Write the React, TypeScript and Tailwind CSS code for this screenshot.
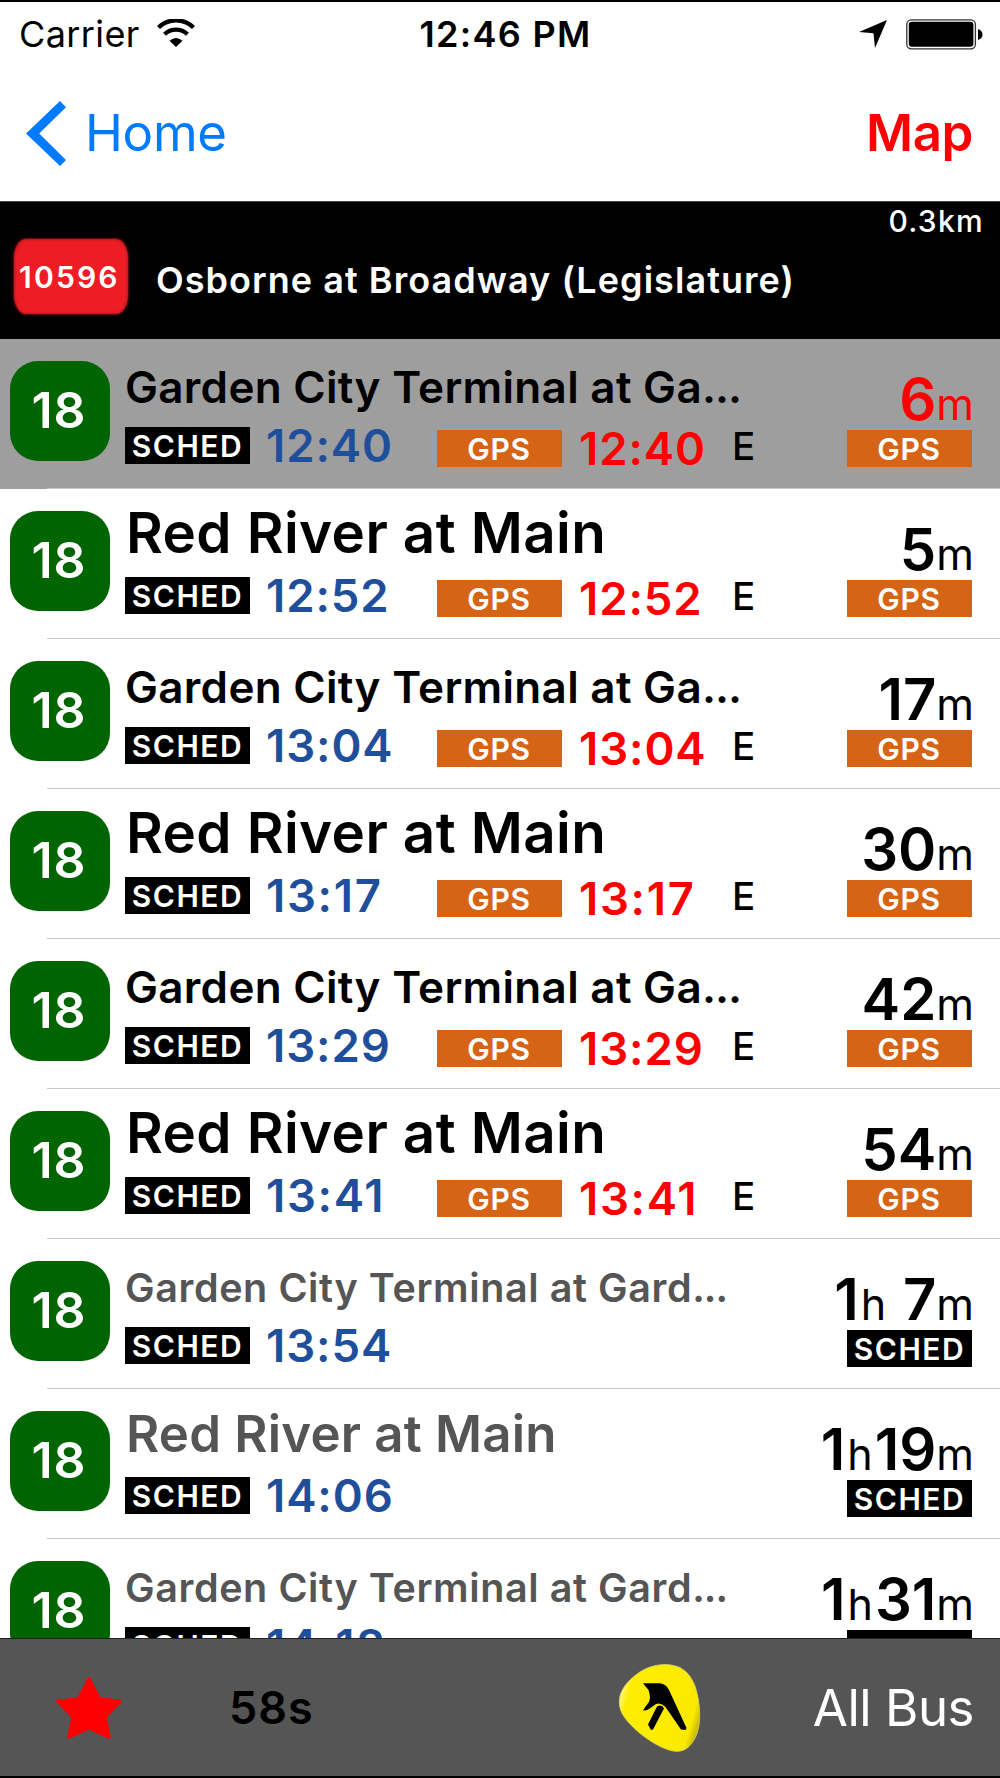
import { FunctionComponent } from "react";

interface IDeparture {
  destination: string;
  truncated?: boolean;
  sched: string;
  gps?: string;
  hours?: string;
  minutes: string;
  departed?: boolean;
}

const departures: IDeparture[] = [
  { destination: "Garden City Terminal at Ga", truncated: true, sched: "12:40", gps: "12:40", minutes: "6", departed: true },
  { destination: "Red River at Main", sched: "12:52", gps: "12:52", minutes: "5" },
  { destination: "Garden City Terminal at Ga", truncated: true, sched: "13:04", gps: "13:04", minutes: "17" },
  { destination: "Red River at Main", sched: "13:17", gps: "13:17", minutes: "30" },
  { destination: "Garden City Terminal at Ga", truncated: true, sched: "13:29", gps: "13:29", minutes: "42" },
  { destination: "Red River at Main", sched: "13:41", gps: "13:41", minutes: "54" },
  { destination: "Garden City Terminal at Gard", truncated: true, sched: "13:54", hours: "1", minutes: " 7" },
  { destination: "Red River at Main", sched: "14:06", hours: "1", minutes: "19" },
  { destination: "Garden City Terminal at Gard", truncated: true, sched: "14:18", hours: "1", minutes: "31" },
];

const titleClass = (item: IDeparture) => {
  if (item.gps) {
    return item.truncated
      ? "text-black text-[44px] leading-[97px] tracking-[0.3px]"
      : "text-black text-[56.5px] leading-[88px] tracking-[0.4px] pl-px";
  }
  return item.truncated
    ? "text-[#555] text-[39.5px] leading-[99px] tracking-[0.6px]"
    : "text-[#555] text-[51px] leading-[89px] tracking-[0.2px] pl-px";
};

const timeTracking = (time: string) =>
  time.slice(3).includes("1") ? "tracking-[1.7px]" : "tracking-[0.9px]";

const StatusBar: FunctionComponent = () => {
  return (
    <div className="h-[64px] shrink-0 grid grid-cols-3 items-center pl-[19px] pr-[17px] text-[36px] leading-[64px]">
      <div className="flex items-center gap-[17px]">
        <span className="tracking-[0.4px]">Carrier</span>
        <svg width="38" height="28" viewBox="0 0 38 28" className="mb-[3px]">
          <path d="M1.5 8.5A25 25 0 0 1 36.5 8.5" fill="none" stroke="#000" strokeWidth="4.2" />
          <path d="M7.5 15.2A16.5 16.5 0 0 1 30.5 15.2" fill="none" stroke="#000" strokeWidth="4.2" />
          <path d="M12.5 21.8Q19 16.2 25.5 21.8L19 28Z" />
        </svg>
      </div>
      <span className="text-center font-[580] pl-[9px] tracking-[1.3px] whitespace-nowrap">12:46 PM</span>
      <div className="flex items-center justify-end gap-[19px]">
        <svg width="28" height="28" viewBox="0 0 28 28">
          <path d="M28 0L16 28L14.5 13.2L0 12Z" />
        </svg>
        <svg width="77" height="31" viewBox="0 0 77 31">
          <rect x="0.8" y="0.8" width="68.6" height="29" rx="4.5" fill="none" stroke="#333" strokeWidth="1.3" />
          <rect x="2.8" y="2.8" width="64.6" height="25" rx="3" />
          <path d="M72 10Q76.500 11.500 76.500 15.500Q76.500 19.500 72 21Z" />
        </svg>
      </div>
    </div>
  );
};

const NavBar: FunctionComponent = () => {
  return (
    <div className="h-[135px] shrink-0 flex items-center justify-between pl-[26px] pr-[27px] pb-px text-[51px] leading-[60px]">
      <div className="flex items-center gap-[19px] text-[#007aff]">
        <svg width="40" height="65" viewBox="0 0 40 65">
          <path d="M34 0L40 6.200L13.200 32.500L40 59L34 65L0 32.500Z" fill="#007aff" />
        </svg>
        <span className="tracking-[-0.3px]">Home</span>
      </div>
      <span className="text-[#f00] font-semibold tracking-[-0.4px]">Map</span>
    </div>
  );
};

const StopHeader: FunctionComponent = () => {
  return (
    <div className="relative h-[138px] shrink-0 bg-black text-white flex pl-[14px] border-t border-[#444]">
      <div className="mt-[37px] w-[114px] h-[75px] rounded-[12px/20px] bg-[#ee1c25] shadow-[0_0_3px_#ee1c25,inset_0_0_3px_#8a1016] pl-[5px] text-[30px] leading-[76px] font-[580] tracking-[2.2px]">
        10596
      </div>
      <span className="ml-[28px] text-[36px] leading-[156px] font-[580] tracking-[1.05px]">
        Osborne at Broadway (Legislature)
      </span>
      <span className="absolute right-[16px] top-0 text-[30px] leading-[38px] font-medium tracking-[1.3px]">
        0.3km
      </span>
    </div>
  );
};

const Sched: FunctionComponent = () => {
  return (
    <div className="w-[125px] h-[37px] shrink-0 bg-black text-white text-center text-[30px] leading-[38px] font-[560] tracking-[1.5px]">
      SCHED
    </div>
  );
};

const Gps: FunctionComponent = () => {
  return (
    <div className="w-[125px] h-[37px] shrink-0 bg-[#d56416] text-white text-center text-[30px] leading-[38px] font-[560] tracking-[0.8px] pr-px">
      GPS
    </div>
  );
};

const Departure: FunctionComponent<{ item: IDeparture }> = ({ item }) => {
  return (
    <div className={item.departed ? "bg-[#9e9e9e]" : "bg-white"}>
      <div className="h-[149px] flex pl-[10px] pr-[28px]">
        <div className="mt-[22px] w-[100px] h-[100px] shrink-0 rounded-[28px] bg-[#006400] text-white text-center text-[50px] leading-[98px] font-[580] tracking-[1px] pr-[2px]">
          18
        </div>
        <div className="ml-[15px] w-[640px] shrink-0">
          <div className={`h-[88px] whitespace-nowrap font-[560] ${titleClass(item)}`}>
            {item.destination}
            {item.truncated && <span className="tracking-[-1px]">...</span>}
          </div>
          <div className="flex">
            <Sched />
            <span
              className={`w-[187px] pl-[16px] text-[45.5px] leading-[37px] font-[580] text-[#1f4f9b] ${timeTracking(item.sched)}`}
            >
              {item.sched}
            </span>
            {item.gps && (
              <>
                <div className="mt-[3px]">
                  <Gps />
                </div>
                <span
                  className={`w-[170px] mt-[3px] pl-[17px] text-[45.5px] leading-[38px] font-semibold text-[#f00] ${timeTracking(item.gps)}`}
                >
                  {item.gps}
                </span>
                <span className="text-[38.5px] leading-[38px] font-medium">E</span>
              </>
            )}
          </div>
        </div>
        <div className="grow flex flex-col items-end">
          <div
            className={`h-[91px] pt-[29px] -mr-[2px] whitespace-pre text-[58px] leading-[62px] font-semibold ${item.departed ? "text-[#f00]" : ""}`}
          >
            {item.hours}
            {item.hours && <span className="text-[43px] font-[370] px-[2px]">h</span>}
            {item.minutes}
            <span className="text-[43px] font-[370]">m</span>
          </div>
          {item.gps ? <Gps /> : <Sched />}
        </div>
      </div>
      <div className="h-px ml-[47px] bg-[#c8c7cc]" />
    </div>
  );
};

const Toolbar: FunctionComponent = () => {
  return (
    <div className="h-[138px] shrink-0 bg-[#555] border-t border-[#222] flex items-center pl-[55px] pr-[26px]">
      <svg width="68" height="64" viewBox="0 0 68 64">
        <path
          d="M34 3L44.300 23L65 25.300L50 40.800L54 61L34 52L14 61L18 40.800L3 25.300L23.700 23Z"
          fill="#f00"
          stroke="#f00"
          strokeWidth="3.5"
          strokeLinejoin="round"
        />
      </svg>
      <span className="ml-[106px] text-[45px] leading-[135px] font-[560] tracking-[0.9px]">58s</span>
      <svg width="84" height="92" viewBox="15 11 84 92" className="ml-auto">
        <defs>
          <linearGradient id="blob" x1="0" y1="0.3" x2="1" y2="0.6">
            <stop offset="0" stopColor="#fff9a0" />
            <stop offset="0.12" stopColor="#fdee00" />
            <stop offset="0.92" stopColor="#fbea00" />
            <stop offset="1" stopColor="#cfc000" />
          </linearGradient>
        </defs>
        <path
          d="M62 13.500C78 13.500 87 20 93 35C98 50 100 72 94 85C88 98 80 103 67 99C48 93 24 73 19 60C15 49 18 39 28 29C38 19 49 14 62 13.500Z"
          fill="url(#blob)"
          stroke="#d8d260"
          strokeWidth="0.8"
        />
        <path d="M41 32.300L58 32.300Q64 33 67 39L84.500 77L83.500 79L79 78.500L63.500 56Q59 51 54 53L47 58Q44 60 41 59.500Q43 56 47 51Q49 46 46.500 39Z" />
        <path d="M55 55.500Q60 53 62 57.500L51 78.500L49 79L46 73.500Z" />
      </svg>
      <span className="ml-[112px] text-[51px] leading-[137px] tracking-[-0.5px] text-white">All Bus</span>
    </div>
  );
};

const App: FunctionComponent = () => {
  return (
    <div className="w-[1000px] h-[1778px] flex flex-col overflow-hidden bg-white text-black border-y-2 border-black font-[Inter,sans-serif]">
      <StatusBar />
      <NavBar />
      <StopHeader />
      <div className="grow min-h-0 overflow-hidden">
        {departures.map((item) => (
          <Departure key={item.sched} item={item} />
        ))}
      </div>
      <Toolbar />
    </div>
  );
};

export default App;
